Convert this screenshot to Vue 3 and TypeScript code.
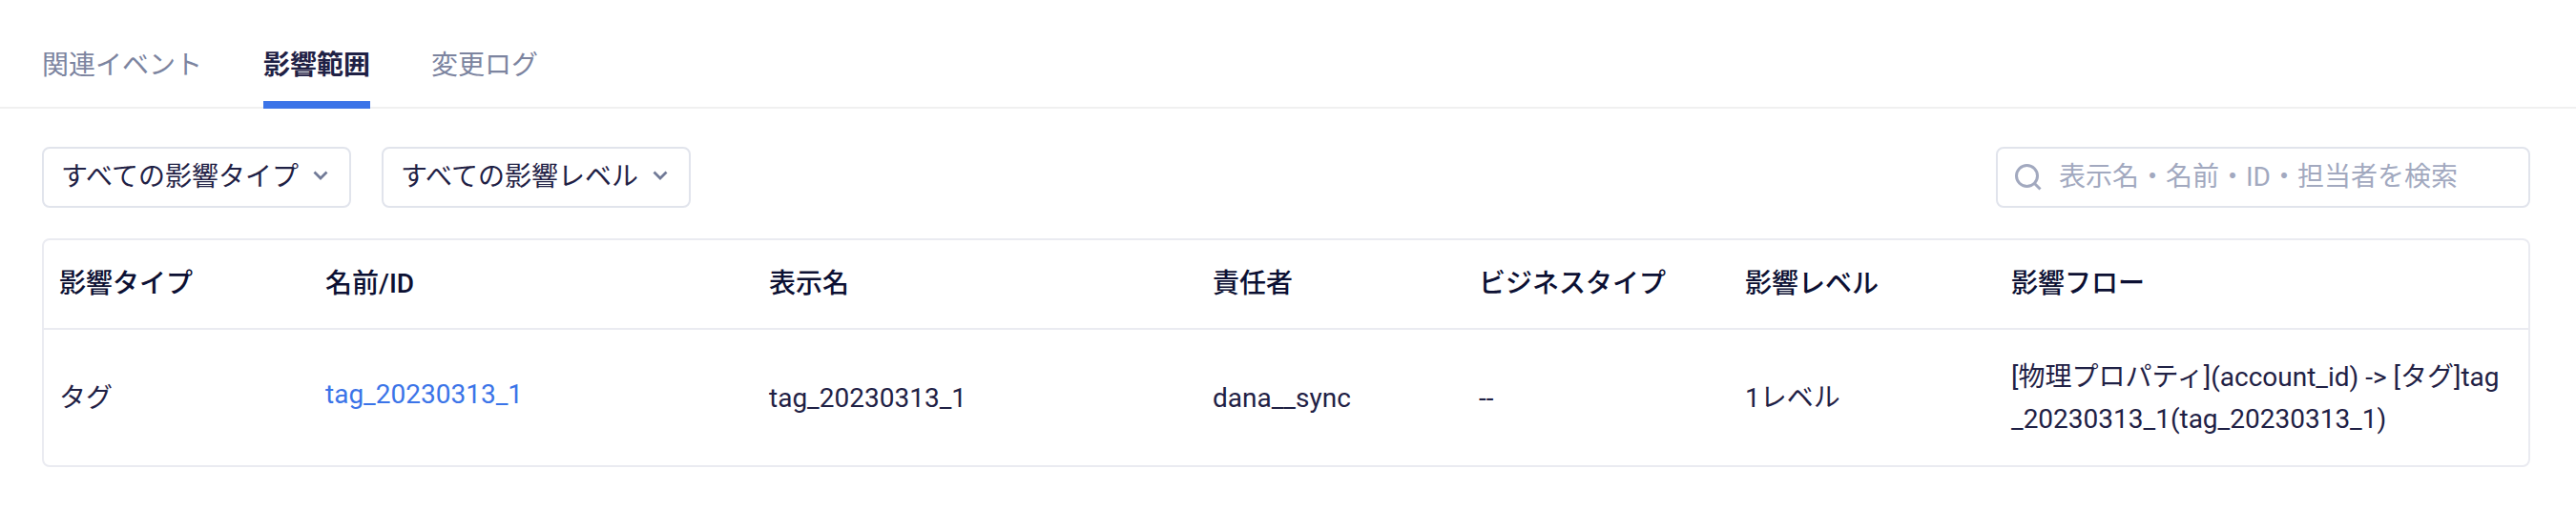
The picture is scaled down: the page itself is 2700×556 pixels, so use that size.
<script setup lang="ts">
import { ref } from 'vue'

interface ImpactRow {
  type: string
  name: string
  displayName: string
  owner: string
  businessType: string
  level: string
  flow: string
}

const tabs: string[] = ['関連イベント', '影響範囲', '変更ログ']
const activeTab = ref('影響範囲')

const filters = [
  { id: 'impact-type', label: '影響タイプ', all: 'すべての影響タイプ' },
  { id: 'impact-level', label: '影響レベル', all: 'すべての影響レベル' },
]

const keyword = ref('')

const columns: string[] = ['影響タイプ', '名前/ID', '表示名', '責任者', 'ビジネスタイプ', '影響レベル', '影響フロー']

const rows: ImpactRow[] = [
  {
    type: 'タグ',
    name: 'tag_20230313_1',
    displayName: 'tag_20230313_1',
    owner: 'dana__sync',
    businessType: '--',
    level: '1レベル',
    flow: '[物理プロパティ](account_id) -> [タグ]tag_20230313_1(tag_20230313_1)',
  },
]
</script>

<template>
  <main class="page">
    <nav class="tabs" role="tablist">
      <button
        v-for="tab in tabs"
        :key="tab"
        type="button"
        role="tab"
        class="tab"
        :class="{ active: tab === activeTab }"
        :aria-selected="tab === activeTab"
        @click="activeTab = tab"
      >
        {{ tab }}
      </button>
    </nav>

    <div class="toolbar">
      <div v-for="filter in filters" :key="filter.id" class="filter">
        <select :id="filter.id" :aria-label="filter.label" class="filter-select">
          <option>{{ filter.all }}</option>
        </select>
        <svg class="chevron" viewBox="0 0 16 10" aria-hidden="true">
          <path d="M1.5 1.5 8 8l6.5-6.5" fill="none" stroke="currentColor" stroke-width="2.8" />
        </svg>
      </div>
      <label class="search">
        <svg class="search-icon" viewBox="0 0 28 28" aria-hidden="true">
          <circle cx="12.5" cy="12.5" r="11" fill="none" stroke="currentColor" stroke-width="3" />
          <path d="m20 20 6.5 6.5" fill="none" stroke="currentColor" stroke-width="3" />
        </svg>
        <input
          v-model="keyword"
          type="text"
          class="search-input"
          aria-label="検索"
          placeholder="表示名・名前・ID・担当者を検索"
        />
      </label>
    </div>

    <div class="table-frame">
      <table class="table">
        <colgroup>
          <col class="col-s" />
          <col class="col-m" />
          <col class="col-m" />
          <col class="col-s" />
          <col class="col-s" />
          <col class="col-s" />
          <col />
        </colgroup>
        <thead>
          <tr>
            <th v-for="column in columns" :key="column" scope="col">{{ column }}</th>
          </tr>
        </thead>
        <tbody>
          <tr v-for="row in rows" :key="row.name">
            <td>{{ row.type }}</td>
            <td><a href="#" class="link">{{ row.name }}</a></td>
            <td>{{ row.displayName }}</td>
            <td>{{ row.owner }}</td>
            <td>{{ row.businessType }}</td>
            <td>{{ row.level }}</td>
            <td>{{ row.flow }}</td>
          </tr>
        </tbody>
      </table>
    </div>
  </main>
</template>

<style>
body {
  margin: 0;
  background: #fff;
}
</style>

<style scoped>
.page {
  font-family: Roboto, 'Noto Sans CJK JP', sans-serif;
  font-size: 28px;
  line-height: 44px;
  color: #1f2145;
}

.page * {
  box-sizing: border-box;
}

.tabs {
  display: flex;
  gap: 64px;
  padding: 24px 44px 0;
  border-bottom: 2px solid #f0f0f0;
}

.tab {
  height: 90px;
  margin: 0 0 -2px;
  padding: 22px 0 14px;
  border: 0;
  border-bottom: 8px solid transparent;
  background: none;
  font: inherit;
  color: #7c849f;
  cursor: pointer;
}

.tab.active {
  border-bottom-color: #3b74e8;
  font-weight: 700;
  color: #1f2145;
}

.toolbar {
  display: flex;
  gap: 32px;
  padding: 40px 48px 32px 44px;
}

.filter {
  display: grid;
  align-items: center;
  width: 324px;
}

.filter-select {
  grid-area: 1 / 1;
  width: 100%;
  height: 64px;
  padding: 0 18px;
  border: 2px solid #e1e4ec;
  border-radius: 8px;
  background: #fff;
  appearance: none;
  font: inherit;
  color: inherit;
}

.chevron {
  grid-area: 1 / 1;
  justify-self: end;
  width: 16px;
  height: 10px;
  margin: 0 24px 4px 0;
  color: #717a97;
  pointer-events: none;
}

.search {
  display: flex;
  align-items: center;
  gap: 18px;
  width: 560px;
  height: 64px;
  margin-left: auto;
  padding: 0 18px;
  border: 2px solid #e1e4ec;
  border-radius: 8px;
}

.search-icon {
  flex: none;
  width: 28px;
  height: 28px;
  color: #a2a9bf;
}

.search-input {
  flex: 1;
  min-width: 0;
  padding: 0;
  border: 0;
  outline: 0;
  background: none;
  font: inherit;
  color: inherit;
}

.search-input::placeholder {
  color: #a2a9bf;
  opacity: 1;
}

.table-frame {
  margin: 0 48px 0 44px;
  border: 2px solid #eaebf1;
  border-radius: 8px;
}

.table {
  width: 100%;
  table-layout: fixed;
  border-collapse: separate;
  border-spacing: 0;
}

.col-s {
  width: calc(100% * 3 / 28);
}

.col-m {
  width: calc(100% * 5 / 28);
}

th,
td {
  padding: 24px 20px 24px 16px;
  text-align: left;
  vertical-align: middle;
  word-break: break-all;
}

th {
  border-bottom: 2px solid #eaebf1;
  font-weight: 500;
  color: #0c1033;
}

td {
  padding-top: 28px;
  padding-bottom: 26px;
}

.link {
  display: block;
  padding-bottom: 8px;
  color: #3b74e8;
  text-decoration: none;
}
</style>
